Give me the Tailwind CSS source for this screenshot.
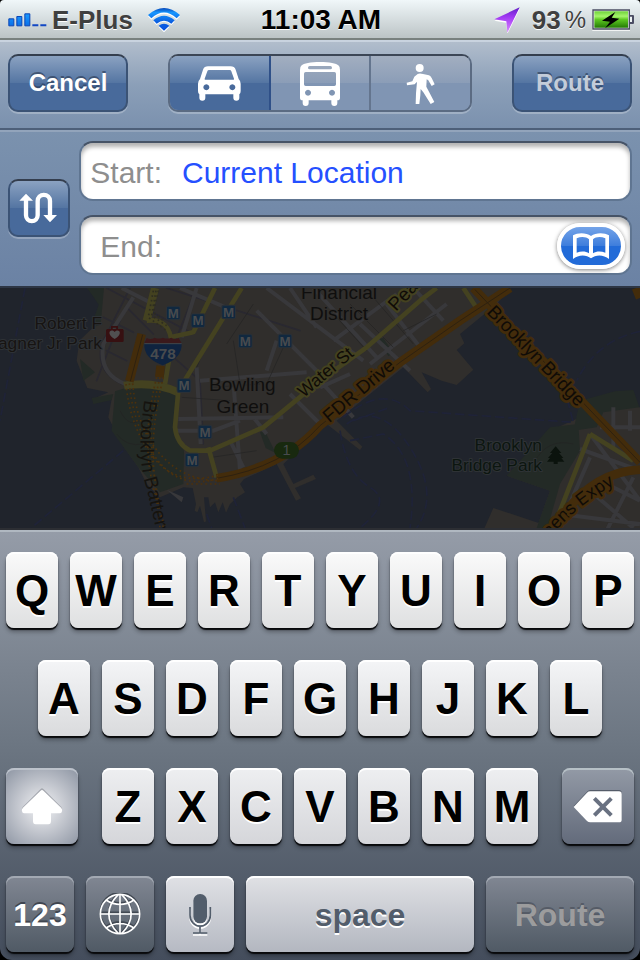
<!DOCTYPE html>
<html lang="en">
<head>
<meta charset="utf-8">
<meta name="viewport" content="width=device-width, initial-scale=1">
<title>Directions</title>
<script src="https://cdn.jsdelivr.net/npm/@tailwindcss/browser@4"></script>
</head>
<body class="bg-black font-['Liberation_Sans',Arial,sans-serif]">
<div class="flex min-h-screen flex-col overflow-hidden rounded-t-sm rounded-b-xl">

  <!-- Status bar -->
  <header class="grid h-10 grid-cols-[1fr_auto_1fr] items-center border-b-2 border-[#79817f] bg-linear-to-b from-[#f0f7f9] to-[#bcc4c6] pt-[2px] pr-[6px] pl-2 [text-shadow:0_1px_0_#fff]">
    <div class="flex items-center gap-[5px]">
      <svg class="h-[14px] w-[39px]" viewBox="23 47 117 42" aria-label="Signal">
        <defs><linearGradient id="sig" x2="0" y2="1"><stop stop-color="#1a9bff"/><stop offset="1" stop-color="#0a6fe8"/></linearGradient></defs>
        <g fill="url(#sig)" stroke="#0b45b5" stroke-width="3"><path d="M25.500 64.500h15v21h-15zM49.500 57.500h15v28h-15zM73.500 49.500h15v36h-15z"/></g>
        <path fill="#1247c4" d="M96 81h18v6H96zM120 81h18v6h-18z"/>
      </svg>
      <span class="text-[26px] leading-8 font-bold text-[#3f3f3f]">E-Plus</span>
      <svg class="ml-[10px] h-6 w-8" viewBox="444 24 96 72" aria-label="Wi-Fi">
        <defs><linearGradient id="wifi" gradientUnits="userSpaceOnUse" x1="0" y1="24" x2="0" y2="94"><stop stop-color="#0747b8"/><stop offset=".2" stop-color="#1897ff"/><stop offset=".6" stop-color="#0b5fe0"/><stop offset="1" stop-color="#0650e0"/></linearGradient></defs>
        <g fill="#fff" transform="translate(0 3)"><path d="M444 46Q492 3 540 46L530 56Q492 20 454 56zM460 62Q492 34 524 62L514 72Q492 53 470 72zM476 78Q492 65 508 78L492 94z"/></g>
        <path fill="url(#wifi)" d="M444 45Q492 3 540 45L530 55Q492 20 454 55zM460 61Q492 34 524 61L514 71Q492 53 470 71zM476 77Q492 65 508 77L492 92z"/>
      </svg>
    </div>
    <time class="text-[28px] leading-8 font-bold text-black">11:03 AM</time>
    <div class="flex items-center justify-end gap-1 text-[#3f3f3f]">
      <svg class="mr-2 h-[26px] w-[26px]" viewBox="523 21 78 78" aria-label="Location">
        <defs><linearGradient id="loc" x2="0" y2="1"><stop stop-color="#6420c8"/><stop offset=".4" stop-color="#a33bf4"/><stop offset="1" stop-color="#dc8cff"/></linearGradient></defs>
        <path fill="#fff" d="M600 27 524 62l36 6 3 34z"/>
        <path fill="url(#loc)" d="M600 22 524 58l36 6 3 34z"/>
      </svg>
      <span class="text-[26px] leading-8 font-bold">93</span>
      <span class="text-2xl">%</span>
      <svg class="ml-[2px] h-[22px] w-[42px]" viewBox="815 25 126 66" aria-label="Battery">
        <defs><linearGradient id="bat" x2="0" y2="1"><stop stop-color="#6fd23a"/><stop offset=".3" stop-color="#a5f46c"/><stop offset=".5" stop-color="#5fca22"/><stop offset="1" stop-color="#237a05"/></linearGradient></defs>
        <path fill="#fff" d="M816 84h113v6H816z"/>
        <path fill="#4b4d63" d="M816 26h113v17h9q3 0 3 3v20q0 4-3 4h-9v17H816z"/>
        <path fill="#eef4f4" d="M820 30h105v53H820zM929 48h6v16h-6z"/>
        <path fill="url(#bat)" d="M822 32h101v49h-101z"/>
        <path d="M885 34 845 60l24 3-15 20 43-29-23-3z"/>
      </svg>
    </div>
  </header>

  <!-- Travel mode toolbar -->
  <nav class="flex h-[88px] items-start justify-between border-t-2 border-t-[#c9d3df] bg-linear-to-b from-[#b1bdcc] via-[#8b9fb8] to-[#7b91ae] px-2 pt-3">
    <button class="h-[58px] w-[120px] rounded-[10px] border-2 border-[#3b5375] border-t-[#343e4e] bg-linear-to-b from-[#8ba2c1] from-0% via-[#5475a2] via-50% to-[#486a9b] to-50% text-2xl font-bold text-white shadow-[0_2px_0_rgba(255,255,255,.25)] [text-shadow:0_-2px_0_rgba(40,55,80,.6)]">Cancel</button>
    <div class="flex h-[58px] w-[304px] overflow-hidden rounded-[10px] border-2 border-[#5b6b82] border-t-[#3c4656] shadow-[0_2px_0_rgba(255,255,255,.25)]" role="group" aria-label="Travel mode">
      <button aria-label="Drive" aria-pressed="true" class="flex flex-1 items-center justify-center border-r-2 border-[#2f5088] bg-linear-to-b from-[#8ba2c1] from-0% via-[#5475a2] via-50% to-[#486a9b] to-50%">
        <svg class="h-[35px] w-[43px]" viewBox="113 46 129 105" fill="#fff" fill-rule="evenodd"><path d="M143 47h68q11 0 15 10l9 28q6 6 6 14v22q0 8-4 10v10a9 9 0 0 1-18 0v-10h-84v10a9 9 0 0 1-18 0v-10q-4-2-4-10V99q0-8 6-14l9-28q4-10 15-10zM146 58q-4 0-5 4l-8 22q-1 3 2 3h84q3 0 2-3l-8-22q-1-4-5-4zM138 101a9 9 0 1 0 .1 0zM216 101a9 9 0 1 0 .1 0z"/></svg>
      </button>
      <button aria-label="Transit" aria-pressed="false" class="flex flex-1 items-center justify-center border-r-2 border-[#64758e] bg-linear-to-b from-[#a2aec0] from-0% via-[#8b9db7] via-50% to-[#8095b3] to-50% pt-[2px]">
        <svg class="h-[44px] w-[40px]" viewBox="900 186 120 132" fill="#fff" fill-rule="evenodd"><path d="M960 186c28 0 50 5 55 10q5 4 5 14v83q0 8-8 8v8a9 9 0 0 1-18 0v-8h-68v8a9 9 0 0 1-18 0v-8q-8 0-8-8v-83q0-10 5-14c5-5 27-10 55-10zM929 198a5 5 0 0 0 0 10h62a5 5 0 0 0 0-10zM917 216q-5 0-5 5v32q0 5 5 5h86q5 0 5-5v-32q0-5-5-5zM924 269a9 9 0 1 0 .1 0zM996 269a9 9 0 1 0 .1 0z"/></svg>
      </button>
      <button aria-label="Walk" aria-pressed="false" class="flex flex-1 items-center justify-center bg-linear-to-b from-[#a2aec0] from-0% via-[#8b9db7] via-50% to-[#8095b3] to-50% pt-[2px]">
        <svg class="h-[42px] w-[30px]" viewBox="259 189 90 126" fill="#fff"><circle cx="300" cy="204" r="12"/><path d="M294 222Q300 219 310 222L328 226Q333 228 336 234L345 253 336 258 326 241 321 238 320 260 328 275 344 306 333 312 311 277 303 267 302 286 299 312H288L289 280 292 245 285 253 262 256 261 248 278 244 284 230z"/></svg>
      </button>
    </div>
    <button class="h-[58px] w-[120px] rounded-[10px] border-2 border-[#3b5375] border-t-[#343e4e] bg-linear-to-b from-[#8ba2c1] from-0% via-[#5475a2] via-50% to-[#486a9b] to-50% pr-1 text-2xl font-bold text-[#c3ccd9] shadow-[0_2px_0_rgba(255,255,255,.25)] [text-shadow:0_-2px_0_rgba(40,55,80,.6)]">Route</button>
  </nav>

  <!-- Start and end fields -->
  <form class="flex h-40 items-center gap-[9px] border-y-2 border-t-[#4d5f79] border-b-[#2d3645] bg-linear-to-b from-[#7b92ae] to-[#6b82a4] px-2 shadow-[inset_0_2px_0_#92a4bb]">
    <button type="button" aria-label="Swap start and end" class="flex h-[58px] w-[62px] shrink-0 items-center justify-center rounded-[10px] border-2 border-[#3b5375] border-t-[#343e4e] bg-linear-to-b from-[#8ba2c1] from-0% via-[#5475a2] via-50% to-[#486a9b] to-50% pr-[2px] shadow-[0_2px_0_rgba(255,255,255,.25)]">
      <svg class="h-[32px] w-[38px]" viewBox="57 198 114 96" fill="none" stroke="#fff" stroke-width="13"><path d="M78 218v50a17 17 0 0 0 35 0v-43a18 18 0 0 1 37 0v46"/><path fill="#fff" stroke="none" d="M78 203 99 224H58zM150 289 171 267H130z"/></svg>
    </button>
    <div class="flex min-w-0 flex-1 flex-col gap-[14px] text-[30px] text-[#8e8e8e]">
      <div class="flex h-[60px] items-center gap-5 rounded-[14px] border-2 border-[#5f7591] border-t-[#465366] bg-white pt-[2px] pr-3 pl-[9px] shadow-[inset_0_4px_4px_rgba(0,0,0,.3)]">
        <label for="start" class="w-[72px] shrink-0 text-right">Start:</label>
        <input id="start" type="text" value="Current Location" class="min-w-0 flex-1 bg-transparent text-[#2550ff] outline-none">
      </div>
      <div class="flex h-[60px] items-center gap-5 rounded-[14px] border-2 border-[#5f7591] border-t-[#465366] bg-white pt-[2px] pr-[5px] pl-[9px] shadow-[inset_0_4px_4px_rgba(0,0,0,.3)]">
        <label for="end" class="w-[72px] shrink-0 text-right">End:</label>
        <input id="end" type="text" class="min-w-0 flex-1 bg-transparent text-[#2550ff] outline-none">
        <button type="button" aria-label="Bookmarks" class="flex h-[46px] w-[68px] shrink-0 items-center justify-center rounded-full border-4 border-white bg-linear-to-b from-[#73a3e8] from-0% via-[#3d7ddc] via-50% to-[#226bd8] to-50% shadow-[0_1px_4px_rgba(0,0,0,.5)]">
          <svg class="h-[26px] w-[36px]" viewBox="756 321 108 78" fill="#fff" fill-rule="evenodd"><path d="M810 330C796 319 770 319 756 328V399C772 385 796 385 810 397 824 385 848 385 864 399V328C850 319 824 319 810 330zM767 337C780 331 796 332 804 340V382C794 375 780 375 767 380zM853 337C840 331 824 332 816 340V382C826 375 840 375 853 380z"/></svg>
        </button>
      </div>
    </div>
  </form>

  <!-- Dimmed map; drawing units are thirds of a pixel -->
  <main class="h-60 min-h-60 flex-1 bg-[#20242c]">
    <svg class="block h-full w-full" viewBox="0 12 1920 720" preserveAspectRatio="xMidYMid slice" font-family="Liberation Sans, Arial, sans-serif" aria-label="Map of Lower Manhattan">
      <rect y="12" width="1920" height="720" fill="#20242c"/>
      <g fill="#302e2c">
        <path d="M262 12 300 60 290 120 238 170 230 230 262 312 325 325 280 345 285 358 335 345 325 400 365 480 415 550 440 600 480 640 550 610 578 612 588 660 584 680 592 685 600 665 612 715 618 712 612 640 625 640 630 670 645 655 655 685 668 655 678 686 690 660 712 640 735 625 720 600 732 585 830 540 888 650 903 643 885 612 948 585 940 572 880 600 850 540 980 420 1080 498 1087 488 1010 410 1210 250 1283 325 1293 315 1265 265 1325 290 1370 303 1420 257 1370 198 1393 178 1380 150 1490 60 1530 12z"/>
        <path d="M1480 672 1450 740h250l-75-20zM1650 440 1520 575 1650 620 1610 732H1920V370L1830 360z"/>
      </g>
      <g fill="#232a26">
        <path d="M345 322 400 305 530 320 525 440 552 500 550 600 480 625 415 550 335 440z"/>
        <path d="M275 342 340 330 335 348 280 360zM240 225 285 265 250 290zM262 12h50l-10 110-30 10 24-70zM780 445l15-3 32 65-30-15zM1135 165l15-3 30 45-15 10z"/>
        <path d="M1740 350 1845 322 1900 318 1918 370 1810 385 1790 430 1720 440zM1650 430 1735 420 1740 500 1680 600 1640 740 1610 732 1650 620 1520 575z"/>
      </g>
      <g fill="none" stroke="#292830" stroke-width="5" stroke-linecap="round">
        <path d="M390 12 305 180q-20 80 60 120M320 12 580 150M460 150 380 70M500 12 900 140M590 12 510 210 600 290 610 480M360 110 290 290M310 100 400 145M320 200 380 230"/>
      </g>
      <g fill="none" stroke="#38383b" stroke-width="12">
        <path d="M365 12 460 60M400 40 310 180q-15 90 65 120M540 12 700 80M590 12 545 160M590 250l12 230M535 405 850 400M530 440h110l80-30M700 290 720 560M600 290 920 265M870 12 950 130M800 12 1090 230M940 12 1130 220M830 170 800 260M770 80 960 270M870 330 960 420M960 290 1060 400M1080 120 1230 260M1160 60 1260 190M1240 12 1330 110M1000 170 1190 30M1110 240 1340 60M960 310 1050 270M690 470l40 80M760 400 800 450"/>
        <path d="M1800 430h130M1740 495 1920 560M1770 450 1920 650M1820 600 1920 650M1840 370v120M1770 520 1700 680M1770 620 1900 732M1900 580 1820 740M1680 690l240 30M1890 380v60"/>
      </g>
      <g fill="none" stroke="#222" stroke-width="2">
        <path d="M620 180 590 250M700 170 720 300M760 60 680 180M850 190 800 300M640 310 780 300M545 340 690 350M635 520 770 500M1010 100 1100 200M1050 60 1180 190M1120 40 1240 180M1210 140 1310 90M360 380q30 60 70 20M350 450q30 40 80 30M1600 540q40-80 120-60"/>
      </g>
      <g fill="none" stroke="#444220" stroke-width="14" stroke-linejoin="round">
        <path stroke-width="24" d="M465 12 440 110M372 305Q460 290 535 325"/>
        <path d="M440 110q70-10 75 70l-20 120M510 160l70-15L645 12M725 12 535 320 525 430q5 50 45 70h60L790 430 960 290 1100 190 1260 50 1310 12M625 490l25 90M1770 450 1660 732M1770 450 1900 530M1390 12l40 60"/>
      </g>
      <g fill="none" stroke="#432c0b" stroke-width="26">
        <path d="M425 150 388 292M482 245l-4 35M650 583Q850 550 960 425L1200 235 1380 110 1530 12M1420 12 1920 535M1660 740Q1760 565 1920 557M1908 12l12 30"/>
      </g>
      <g fill="none" stroke="#2e2110" stroke-width="3"><path d="M428 152 391 292M650 583Q850 550 960 425L1200 235 1380 110 1530 12M1425 17 1920 535"/></g>
      <g fill="none" stroke="#4b310d" stroke-width="5" stroke-dasharray="5 9">
        <path d="M378 300Q390 430 460 520T660 572M388 298Q400 430 470 525T660 582M398 298Q410 430 480 510T660 590M470 280Q430 440 450 560T500 732M480 280Q440 440 460 560T490 732M490 280Q450 440 462 560T480 732M560 600H660"/>
        <path stroke="#2e2d20" d="M460 20 445 100 500 140M468 20 455 95 500 125M475 20 460 85 490 110"/>
      </g>
      <g fill="none" stroke="#1f2338" stroke-width="5" stroke-dasharray="28 12">
        <path d="M75 12 0 410M370 500 90 735M1030 400Q1150 300 1230 380L1720 415 1700 340M1920 142Q1790 170 1730 290M1040 420Q1140 350 1230 490T1250 732M1020 440Q1040 570 1110 610T1080 732M1050 470 1150 450Q1260 520 1230 732M1060 410 1170 370M620 690 635 732M700 640 735 732"/>
      </g>
      <g fill="#38383b"><path d="M500 617 550 640 545 655z"/></g>
      <!-- Metro stations -->
      <defs><g id="metro"><rect x="-22" y="-22" width="44" height="44" rx="6" fill="#2b3036"/><rect x="-19" y="-19" width="38" height="38" rx="4" fill="#10283f"/><text y="14" text-anchor="middle" font-size="40" font-weight="bold" fill="#484b4e">M</text></g></defs>
      <use href="#metro" x="520" y="87"/><use href="#metro" x="594" y="110"/><use href="#metro" x="686" y="84"/><use href="#metro" x="736" y="171"/><use href="#metro" x="855" y="171"/><use href="#metro" x="552" y="305"/><use href="#metro" x="615" y="444"/><use href="#metro" x="576" y="528"/>
      <!-- Highway shields and park markers -->
      <path fill="#0f233f" d="M433 178h112q2 46-57 66-58-20-55-66z"/>
      <path fill="#3b191b" d="M440 162q12 6 24-1 12 5 25 0 12 5 25 0 12 7 22 1l9 16H433z"/>
      <path stroke="#44474a" stroke-width="3" d="M433 179h112"/>
      <text x="489" y="224" text-anchor="middle" font-size="46" font-weight="bold" fill="#484b4e">478</text>
      <rect x="822" y="474" width="75" height="50" rx="25" fill="#18290f"/>
      <text x="860" y="514" text-anchor="middle" font-size="44" fill="#484b4e">1</text>
      <path fill="#371011" d="M333 126h21v9h14l3 4v31q0 4-4 4h-45q-4 0-4-4v-31l3-4h12zM338 131v4h11v-4z" fill-rule="evenodd"/>
      <path fill="#505050" d="M344 165c-28-16-12-34 0-21 12-13 28 5 0 21z"/>
      <path fill="#0b130d" d="M1667 487l17 20h-7l13 15h-6l9 11h-20v7h-12v-7h-20l9-11h-6l13-15h-7z"/>
      <!-- Place labels -->
      <g font-size="57" fill="#0f0e0e" stroke="#302e2c" stroke-width="5" paint-order="stroke">
        <text x="727" y="320" text-anchor="middle">Bowling</text><text x="729" y="386" text-anchor="middle">Green</text>
        <text x="1017" y="44" text-anchor="middle">Financial</text><text x="1017" y="107" text-anchor="middle">District</text>
      </g>
      <g font-size="52" text-anchor="end" fill="#0c1610" stroke="#2e3235" stroke-width="6" stroke-linejoin="round" paint-order="stroke">
        <text x="1626" y="501">Brooklyn</text><text x="1626" y="560">Bridge Park</text>
      </g>
      <g font-size="52" text-anchor="end" fill="#171412" stroke="#2e3236" stroke-width="6" stroke-linejoin="round" paint-order="stroke">
        <text x="306" y="136">Robert F</text><text x="306" y="194">agner Jr Park</text>
      </g>
      <g font-size="52" fill="#0f0b07" stroke="#444220" stroke-width="12" stroke-linejoin="round" paint-order="stroke">
        <text transform="translate(911 342) rotate(-40)">Water St</text>
        <text transform="translate(1188 84) rotate(-47)" font-size="57">Pearl St</text>
        <g stroke="#432c0b" stroke-width="16">
          <text transform="translate(988 418) rotate(-40)" font-size="56">FDR Drive</text>
          <text transform="translate(1458 86) rotate(46)" font-size="56">Brooklyn Bridge</text>
          <path id="expy" d="M1590 850Q1680 690 1850 598" fill="none" stroke="none"/>
          <text font-size="54" text-anchor="end"><textPath href="#expy" startOffset="98%">Queens Expy</textPath></text>
        </g>
        <path id="battery" d="M434 347Q405 510 442 620L495 860" fill="none" stroke="none"/>
        <text stroke="none" fill="#15130f" font-size="57"><textPath href="#battery">Brooklyn Battery Tunnel</textPath></text>
      </g>
    </svg>
  </main>

  <!-- Keyboard -->
  <section aria-label="Keyboard" class="flex flex-col gap-8 border-t-2 border-[#2c2e33] bg-linear-to-b from-[#959ca8] via-[#6c7682] to-[#444d5c] px-[6px] pt-[22px] pb-2 text-[44px] leading-none font-bold text-black shadow-[inset_0_2px_0_#b0b8c1] [&_button]:h-[76px] [&_button]:rounded-lg [&_button]:pt-[2px]">
    <div class="flex gap-3 [&>button]:flex-1 [&>button]:bg-linear-to-b [&>button]:from-[#fafafa] [&>button]:to-[#dfe0e1] [&>button]:shadow-[inset_0_2px_0_#fff,0_2px_1px_#08090b,0_4px_4px_rgba(0,0,0,.3)] [&>button]:[text-shadow:0_2px_0_#fff]">
      <button>Q</button><button>W</button><button>E</button><button>R</button><button>T</button><button>Y</button><button>U</button><button>I</button><button>O</button><button>P</button>
    </div>
    <div class="flex gap-3 px-8 [&>button]:flex-1 [&>button]:bg-linear-to-b [&>button]:from-[#f4f5f7] [&>button]:to-[#dadbdd] [&>button]:shadow-[inset_0_2px_0_#fff,0_2px_1px_#08090b,0_4px_4px_rgba(0,0,0,.3)] [&>button]:[text-shadow:0_2px_0_#fff]">
      <button>A</button><button>S</button><button>D</button><button>F</button><button>G</button><button>H</button><button>J</button><button>K</button><button>L</button>
    </div>
    <div class="flex gap-6">
      <button aria-label="Shift" class="flex w-[72px] items-center justify-center bg-[radial-gradient(circle_at_50%_52%,#f2f3f5_0%,#c9ccd3_40%,#8b93a1_100%)] shadow-[inset_0_2px_0_#bcc2cb,0_2px_1px_#08090b,0_4px_4px_rgba(0,0,0,.3)]">
        <svg class="h-[38px] w-[42px]" viewBox="63 112 126 114"><path d="M126 116Q128 116 131 119L184 172Q188 177 186 182 185 187 180 187H153V212Q153 221 145 221H107Q99 221 99 212V187H72Q67 187 66 182 64 177 68 172L121 119Q124 116 126 116z" transform="translate(0 -3)" fill="#a6a9b0"/><path fill="#fff" d="M126 118Q128 118 131 121L184 172Q188 177 186 182 185 188 180 188H153V212Q153 221 145 221H107Q99 221 99 212V188H72Q67 188 66 182 64 177 68 172L121 121Q124 118 126 118z"/></svg>
      </button>
      <div class="flex flex-1 gap-3 [&>button]:flex-1 [&>button]:bg-linear-to-b [&>button]:from-[#eeeff1] [&>button]:to-[#d5d6da] [&>button]:shadow-[inset_0_2px_0_#fff,0_2px_1px_#08090b,0_4px_4px_rgba(0,0,0,.3)] [&>button]:[text-shadow:0_2px_0_#fff]">
        <button>Z</button><button>X</button><button>C</button><button>V</button><button>B</button><button>N</button><button>M</button>
      </div>
      <button aria-label="Delete" class="flex w-[72px] items-center justify-center bg-linear-to-b from-[#939aa6] to-[#636b7b] shadow-[inset_0_2px_0_#b6c0c6,0_2px_1px_#08090b,0_4px_4px_rgba(0,0,0,.3)]">
        <svg class="h-[34px] w-[50px]" viewBox="760 118 150 102"><path fill="#555c69" d="M762 166 802 123Q806 118 812 118H898Q906 118 906 126V208H812z"/><path fill="#fff" d="M762 169 802 126Q806 122 812 122H898Q906 122 906 130V207Q906 215 898 215H812Q806 215 802 211z"/><path stroke="#697181" stroke-width="12" d="M824 143 875 194M875 143 824 194"/></svg>
      </button>
    </div>
    <div class="flex gap-3 text-[32px]">
      <button class="w-[68px] bg-linear-to-b from-[#818793] to-[#505a65] text-white shadow-[inset_0_2px_0_#a3a9b3,0_2px_1px_#08090b,0_4px_4px_rgba(0,0,0,.3)] [text-shadow:0_-2px_0_#3f454f]">123</button>
      <button aria-label="Next keyboard" class="flex w-[68px] items-center justify-center bg-linear-to-b from-[#818793] to-[#505a65] shadow-[inset_0_2px_0_#a3a9b3,0_2px_1px_#08090b,0_4px_4px_rgba(0,0,0,.3)]">
        <svg class="h-[44px] w-[44px]" viewBox="-66 -63 132 132" fill="none" stroke-width="5">
          <defs><g id="globe"><circle r="59"/><path d="M0-59V59M-59 0H59M-42-42Q0-15 42-42M-42 42Q0 15 42 42M-5-59Q-62 0-5 59M5-59Q62 0 5 59"/></g></defs>
          <use href="#globe" y="-5" stroke="#414852"/><use href="#globe" stroke="#fff"/>
        </svg>
      </button>
      <button aria-label="Dictate" class="flex w-[68px] items-center justify-center bg-linear-to-b from-[#e0e1e5] to-[#b6bac3] shadow-[inset_0_2px_0_#fff,0_2px_1px_#08090b,0_4px_4px_rgba(0,0,0,.3)]">
        <svg class="h-[44px] w-[24px]" viewBox="566 429 72 132">
          <defs><g id="mic"><rect x="582" y="432" width="41" height="88" rx="20" stroke="none"/><path fill="none" stroke-width="5" d="M572 471V496a30 32 0 0 0 61 0V471M602 528v20M581 549h43"/></g></defs>
          <use href="#mic" y="6" fill="#fff" stroke="#fff"/><use href="#mic" fill="#525d6b" stroke="#525d6b"/>
        </svg>
      </button>
      <button class="flex-1 bg-linear-to-b from-[#e0e1e5] to-[#b3b7c0] text-[#525d6b] shadow-[inset_0_2px_0_#fff,0_2px_1px_#08090b,0_4px_4px_rgba(0,0,0,.3)] [text-shadow:0_2px_0_#fff]">space</button>
      <button class="w-[148px] bg-linear-to-b from-[#818793] to-[#505a65] text-[#9c9c9d] shadow-[inset_0_2px_0_#a3a9b3,0_2px_1px_#08090b,0_4px_4px_rgba(0,0,0,.3)] [text-shadow:0_-2px_0_#555b66]">Route</button>
    </div>
  </section>
</div>
</body>
</html>
